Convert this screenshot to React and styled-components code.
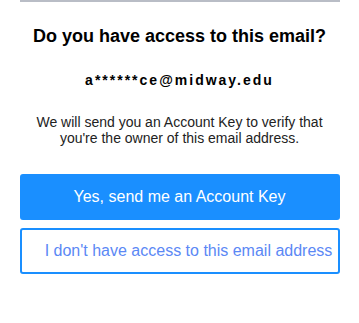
import React from "react";
import styled, { createGlobalStyle } from "styled-components";

const Global = createGlobalStyle`
  html, body { margin: 0; padding: 0; background: #fff; }
  body { font-family: Arial, "Liberation Sans", sans-serif; }
`;

const Panel = styled.div`
  width: 320px;
  margin: 0 auto;
  border-top: 2px solid #b9bdc6;
  display: flex;
  flex-direction: column;
  align-items: center;
`;

const Title = styled.h1`
  margin: 23px 0 0;
  font-size: 18px;
  font-weight: bold;
  color: #000;
  line-height: 22px;
  text-align: center;
`;

const Email = styled.div`
  margin-top: 25px;
  font-size: 14px;
  font-weight: bold;
  letter-spacing: 2px;
  color: #000;
  line-height: 16px;
`;

const Text = styled.p`
  margin: 26px 0 0;
  font-size: 14px;
  line-height: 16px;
  color: #222;
  text-align: center;
`;

const Actions = styled.div`
  align-self: stretch;
  margin-top: 28px;
  display: flex;
  flex-direction: column;
  gap: 8px;
`;

const Button = styled.button`
  box-sizing: border-box;
  width: 100%;
  height: 46px;
  border-radius: 3px;
  font-family: Arial, "Liberation Sans", sans-serif;
  font-size: 16px;
  white-space: nowrap;
  cursor: pointer;
  border: 2px solid #1a8fff;
  background: ${(p) => (p.$primary ? "#1a8fff" : "#fff")};
  color: ${(p) => (p.$primary ? "#fff" : "#5b88f5")};
  padding: ${(p) => (p.$primary ? "0" : "0 4px 0 22px")};
  text-align: center;
`;

export default function App() {
  return (
    <>
      <Global />
      <Panel>
        <Title>Do you have access to this email?</Title>
        <Email>a******ce@midway.edu</Email>
        <Text>
          We will send you an Account Key to verify that
          <br />
          you're the owner of this email address.
        </Text>
        <Actions>
          <Button $primary>Yes, send me an Account Key</Button>
          <Button>I don't have access to this email address</Button>
        </Actions>
      </Panel>
    </>
  );
}
